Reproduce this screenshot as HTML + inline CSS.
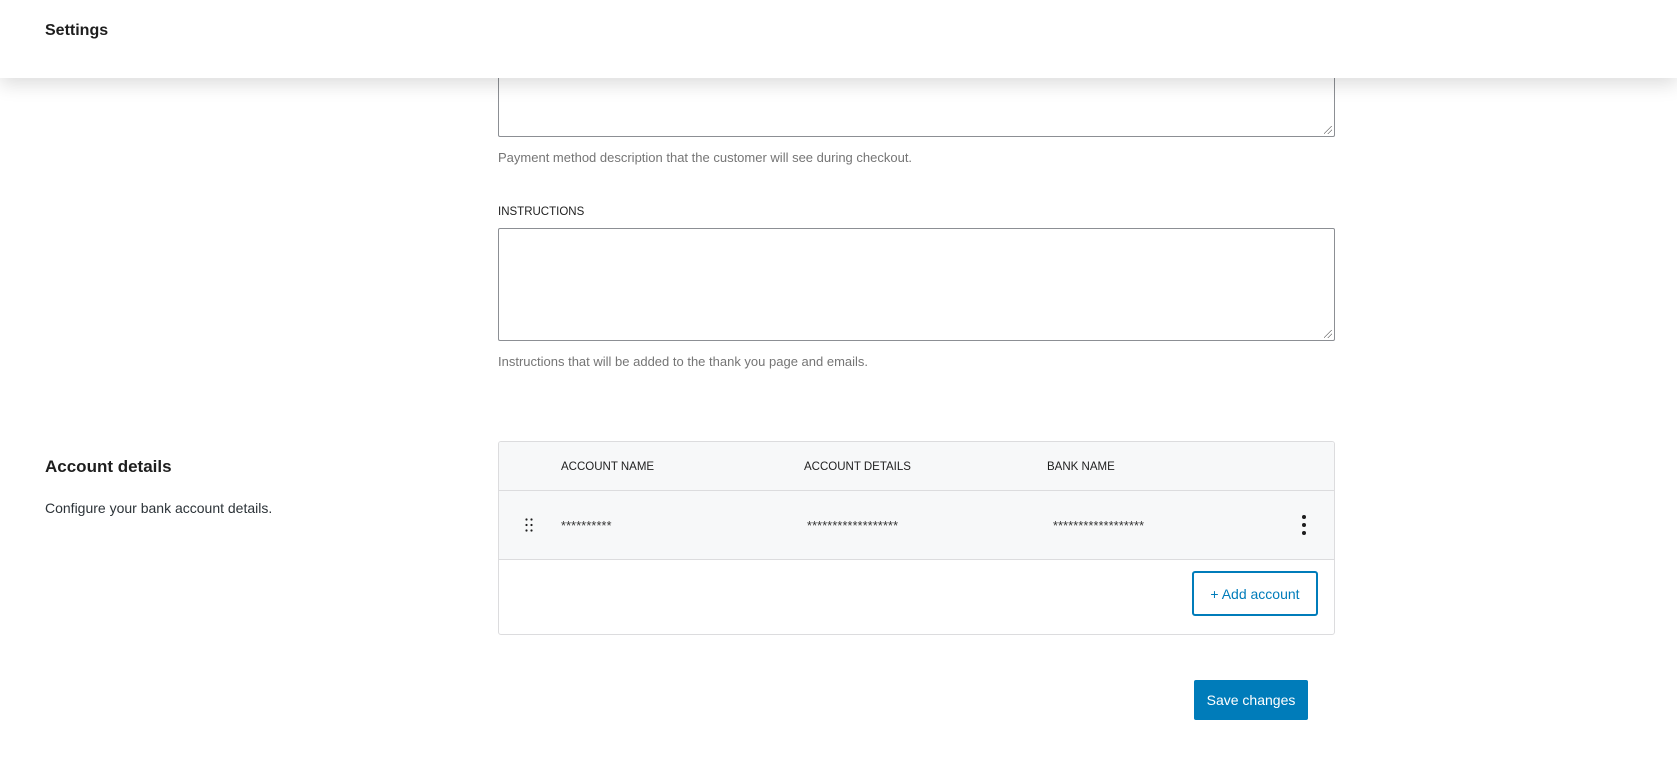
<!DOCTYPE html>
<html><head><meta charset="utf-8"><style>
*{box-sizing:border-box;margin:0;padding:0}
body{width:1677px;height:769px;background:#fff;font-family:"Liberation Sans",sans-serif;color:#1e1e1e;position:relative;overflow:hidden}
.hdr{position:absolute;left:0;top:0;width:1677px;height:78px;background:#fff;box-shadow:0 6px 18px rgba(0,0,0,.14);z-index:5}
.hdr span{position:absolute;left:45px;top:22px;font-size:16px;font-weight:600}
.ta{position:absolute;left:498px;width:837px;border:1px solid #8c8f94;border-radius:2px;background:#fff}
.ta:after{content:"";position:absolute;right:2px;bottom:2px;width:8px;height:8px;background:linear-gradient(135deg,transparent 45%,#777 46%,#777 52%,transparent 53%,transparent 70%,#777 71%,#777 77%,transparent 78%)}
.help{position:absolute;left:498px;font-size:13px;color:#757575}
.lbl{position:absolute;left:498px;font-size:11.5px;font-weight:500;text-transform:uppercase;color:#1e1e1e}
.tbl{position:absolute;left:498px;top:441px;width:837px;height:194px;border:1px solid #dcdcde;border-radius:3px;overflow:hidden}
.th{position:absolute;left:0;top:0;width:100%;height:49px;background:#f7f8f9;border-bottom:1px solid #dcdcde}
.tr{position:absolute;left:0;top:49px;width:100%;height:69px;background:#f7f8f9;border-bottom:1px solid #dcdcde}
.c{position:absolute;font-size:11.5px}
.star{position:absolute;font-size:12.5px;color:#333;letter-spacing:0.2px}
.btn{position:absolute;font-size:14px;display:flex;align-items:center;justify-content:center;border-radius:2px}
</style></head><body>
<div class="hdr"><span>Settings</span></div>
<div class="ta" style="top:60px;height:77px"></div>
<div class="help" style="top:150px">Payment method description that the customer will see during checkout.</div>
<div class="lbl" style="top:206px">Instructions</div>
<div class="ta" style="top:228px;height:113px"></div>
<div class="help" style="top:354px">Instructions that will be added to the thank you page and emails.</div>
<div style="position:absolute;left:45px;top:457px;font-size:17px;font-weight:600">Account details</div>
<div style="position:absolute;left:45px;top:500px;font-size:14px;color:#2c3338">Configure your bank account details.</div>
<div class="tbl">
 <div class="th">
  <div class="c" style="left:62px;top:19px">ACCOUNT NAME</div>
  <div class="c" style="left:305px;top:19px">ACCOUNT DETAILS</div>
  <div class="c" style="left:548px;top:19px">BANK NAME</div>
 </div>
 <div class="tr">
  <svg style="position:absolute;left:26px;top:27px" width="8" height="14"><g fill="#1e1e1e"><circle cx="1.5" cy="1.5" r="1.1"/><circle cx="6.5" cy="1.5" r="1.1"/><circle cx="1.5" cy="7" r="1.1"/><circle cx="6.5" cy="7" r="1.1"/><circle cx="1.5" cy="12.5" r="1.1"/><circle cx="6.5" cy="12.5" r="1.1"/></g></svg>
  <div class="star" style="left:62px;top:28px">**********</div>
  <div class="star" style="left:308px;top:28px">******************</div>
  <div class="star" style="left:554px;top:28px">******************</div>
  <svg style="position:absolute;left:802px;top:23px" width="6" height="22"><g fill="#1e1e1e"><circle cx="3" cy="3" r="2"/><circle cx="3" cy="11" r="2"/><circle cx="3" cy="19" r="2"/></g></svg>
 </div>
 <div class="btn" style="left:693px;top:129px;width:126px;height:45px;border:2px solid #007cba;color:#007cba;border-radius:3px">+ Add account</div>
</div>
<div class="btn" style="left:1194px;top:680px;width:114px;height:40px;background:#007cba;color:#fff">Save changes</div>
</body></html>
